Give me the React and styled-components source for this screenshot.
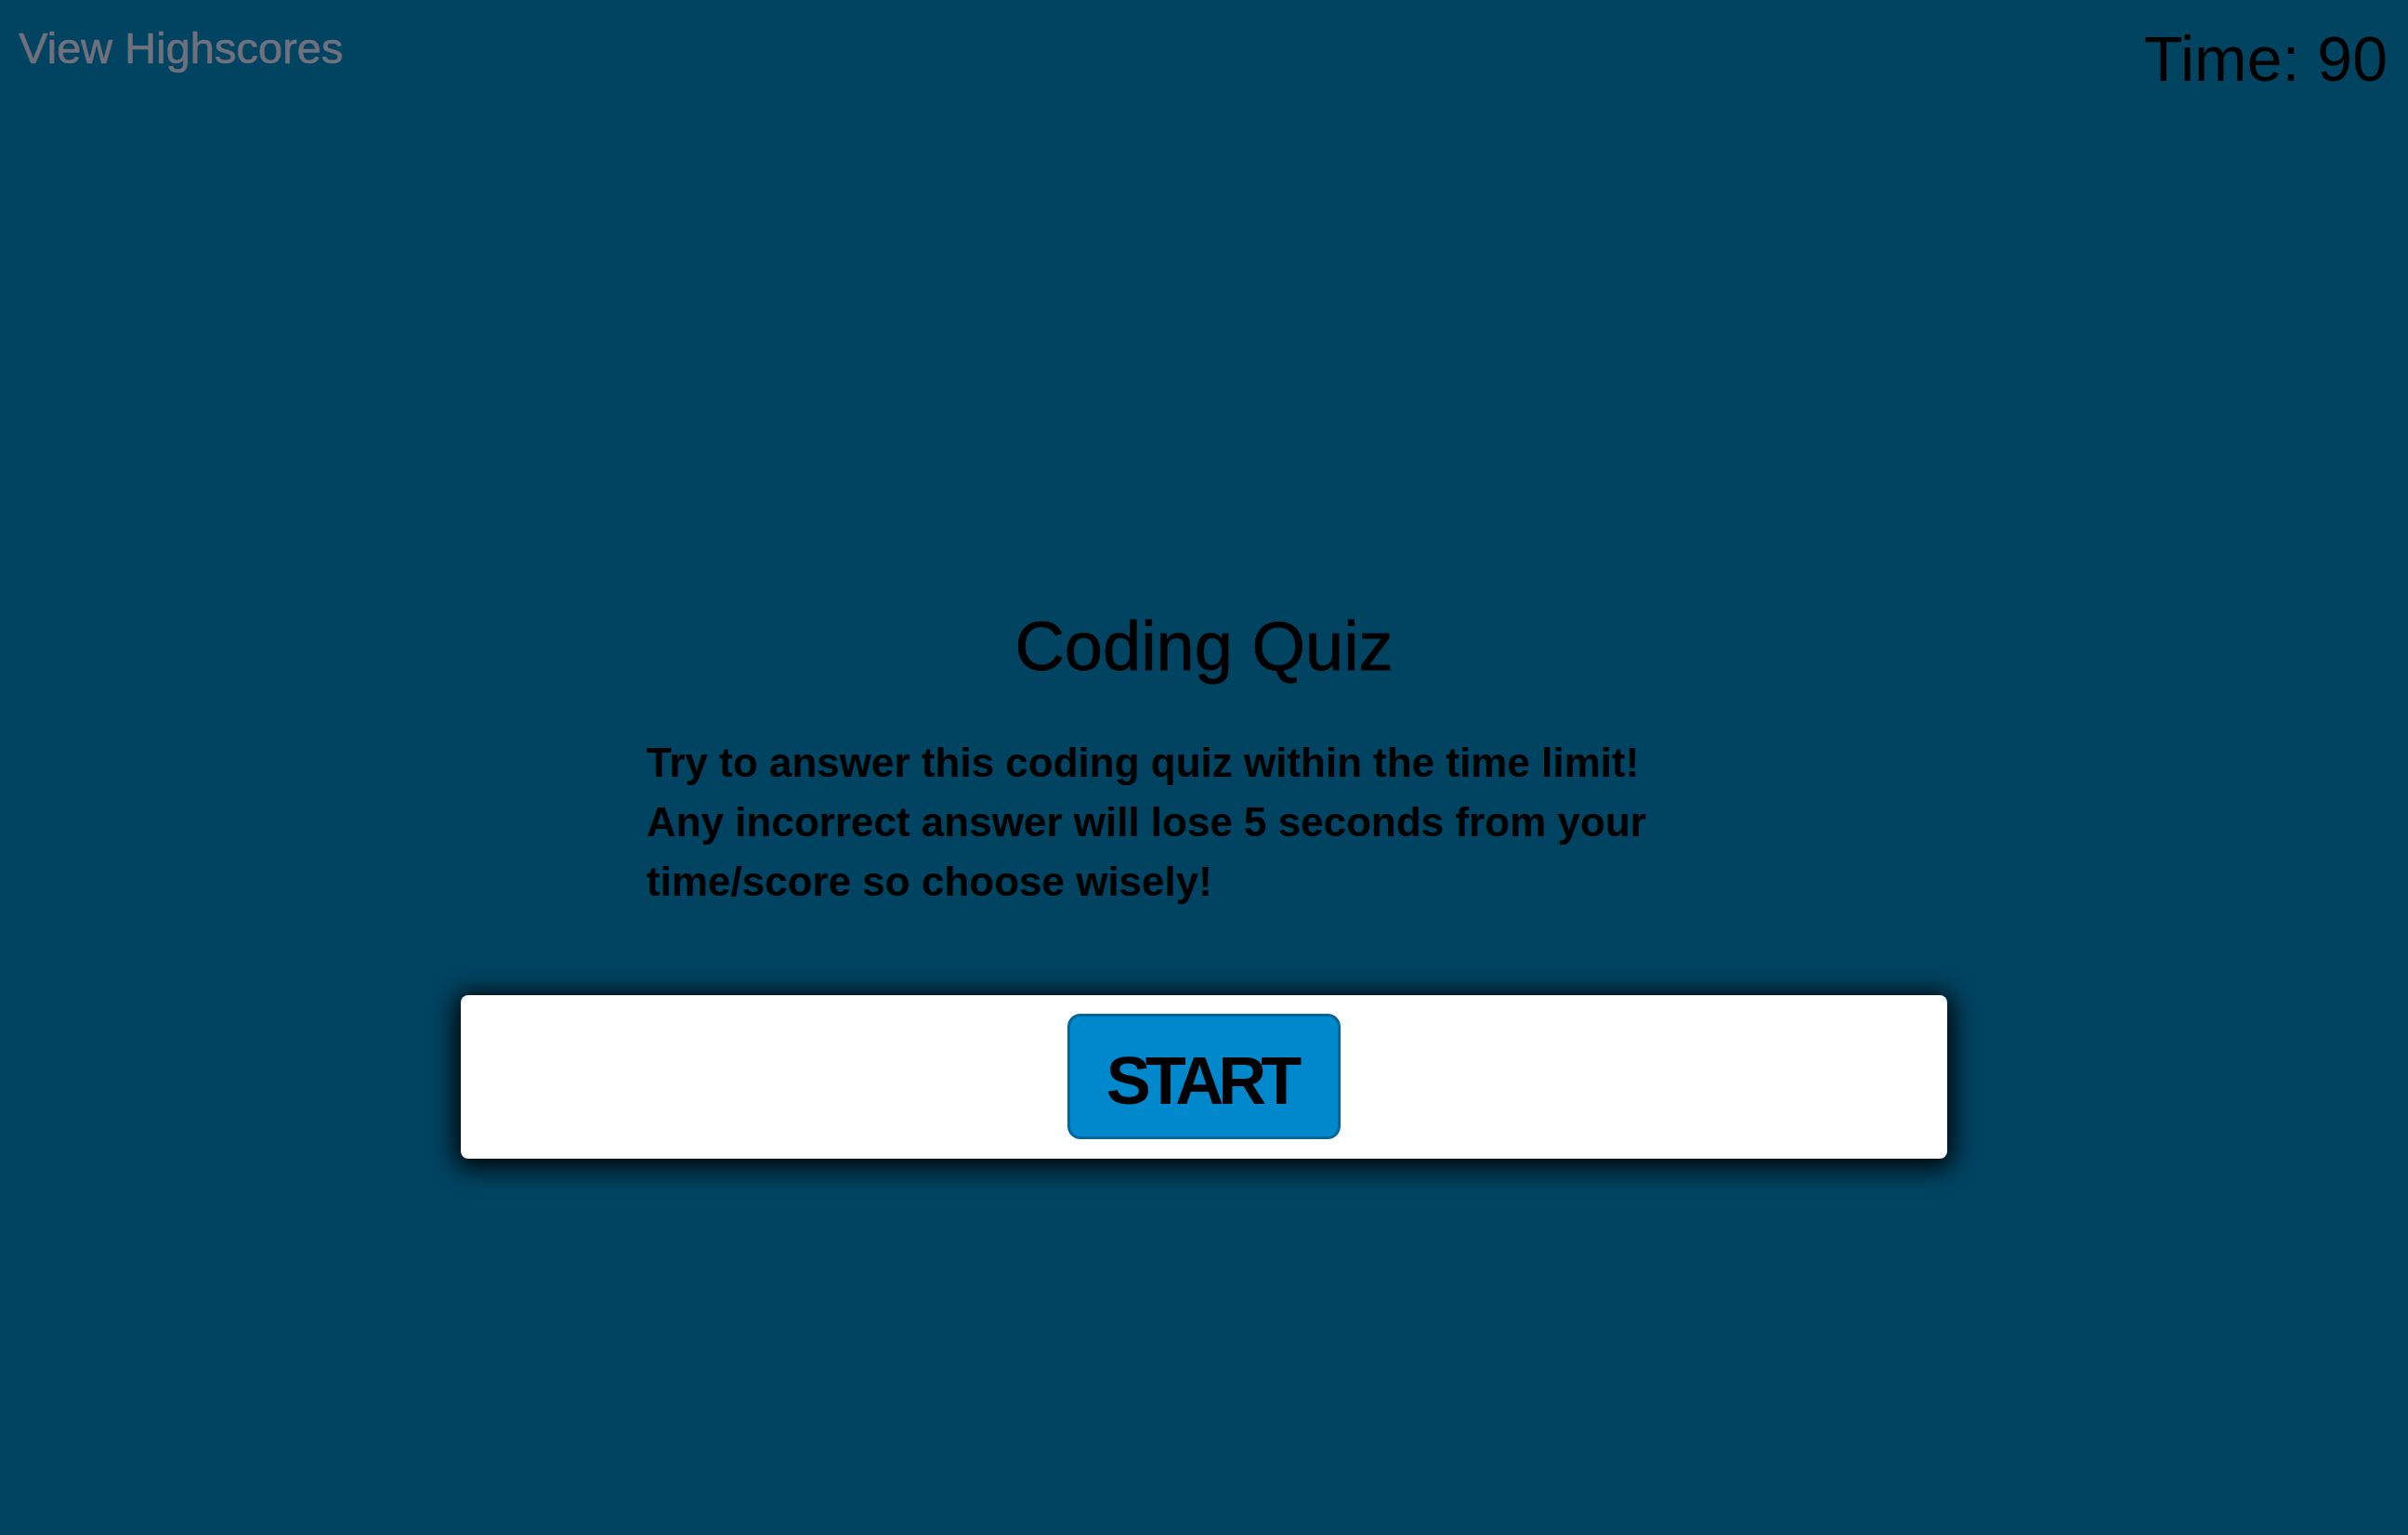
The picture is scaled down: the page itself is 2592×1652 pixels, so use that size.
import React from 'react';
import styled, { createGlobalStyle } from 'styled-components';

const GlobalStyle = createGlobalStyle`
  html, body {
    margin: 0;
    padding: 0;
    background: #004462;
  }
  body {
    font-family: "Liberation Sans", Arial, sans-serif;
  }
`;

const Page = styled.div`
  min-height: 100vh;
  background: #004462;
  display: flex;
  flex-direction: column;
`;

const Header = styled.header`
  display: flex;
  justify-content: space-between;
  align-items: flex-start;
  padding: 26px 22px 0 20px;
`;

const HighscoresLink = styled.a`
  font-size: 47px;
  line-height: 1.117;
  color: #71717e;
  text-decoration: none;
  cursor: pointer;
  -webkit-text-stroke: 0.6px #71717e;
`;

const Timer = styled.div`
  font-size: 68px;
  line-height: 1.117;
  color: #000;
`;

const Main = styled.main`
  display: flex;
  flex-direction: column;
  align-items: center;
`;

const Title = styled.h1`
  margin: 549px 0 0;
  font-size: 74px;
  font-weight: normal;
  line-height: 89px;
  color: #000;
  -webkit-text-stroke: 0.8px #000;
`;

const Intro = styled.p`
  width: 1200px;
  margin: 49px 0 0;
  font-weight: bold;
  font-size: 44px;
  line-height: 64px;
  color: #000;
`;

const StartCard = styled.div`
  width: 1600px;
  height: 176px;
  margin-top: 90px;
  box-sizing: border-box;
  background: #fff;
  border-radius: 8px;
  box-shadow: 0 4px 28px 6px rgba(0, 0, 0, 0.95);
  display: flex;
  align-items: center;
  justify-content: center;
`;

const StartButton = styled.button`
  width: 294px;
  height: 135px;
  box-sizing: border-box;
  background: #0088cc;
  border: 3px solid #00679a;
  border-radius: 14px;
  font-family: "Liberation Sans", Arial, sans-serif;
  font-weight: bold;
  font-size: 72px;
  letter-spacing: -6px;
  text-indent: -6px;
  color: #000;
  cursor: pointer;
  padding: 8px 0 0;
`;

const App = () => {
  return (
    <Page>
      <GlobalStyle />
      <Header>
        <HighscoresLink>View Highscores</HighscoresLink>
        <Timer>Time: 90</Timer>
      </Header>
      <Main>
        <Title>Coding Quiz</Title>
        <Intro>
          Try to answer this coding quiz within the time limit!
          <br />
          Any incorrect answer will lose 5 seconds from your
          <br />
          time/score so choose wisely!
        </Intro>
        <StartCard>
          <StartButton>START</StartButton>
        </StartCard>
      </Main>
    </Page>
  );
};

export default App;
